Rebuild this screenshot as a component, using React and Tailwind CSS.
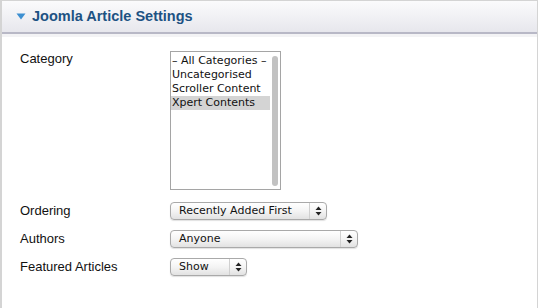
import React from "react";

function Arrows() {
  return (
    <svg width="7" height="10" viewBox="0 0 7 10" className="block">
      <path d="M3.5 0.5 L6.5 4 L0.5 4 Z" fill="#222" />
      <path d="M3.5 9.5 L6.5 6 L0.5 6 Z" fill="#222" />
    </svg>
  );
}

function Select({ label, width }) {
  return (
    <div
      className={`flex h-[18px] items-stretch rounded-[4px] border border-[#a9a9a9] bg-gradient-to-b from-[#ffffff] via-[#f4f4f4] to-[#e2e2e2] shadow-[0_1px_1px_rgba(0,0,0,0.12)] ${width}`}
    >
      <div className="flex flex-1 items-center pl-[8px] text-[11px] text-[#111] [font-family:'DejaVu_Sans',sans-serif]">
        {label}
      </div>
      <div className="flex w-[17px] items-center justify-center border-l border-[#d0d0d0]">
        <Arrows />
      </div>
    </div>
  );
}

export default function App() {
  return (
    <div className="h-[308px] w-[540px] bg-white [font-family:'Liberation_Sans',Arial,sans-serif]">
      <div className="h-[308px] w-[538px] border-l-2 border-t border-r border-[#d4d4d4]">
        <div className="flex h-[33px] items-center border-b-2 border-[#b8b8c6] bg-gradient-to-b from-[#fbfbfc] to-[#e7e7ed] pl-[14px]">
          <svg width="10" height="7" viewBox="0 0 10 7" className="mr-[6px]">
            <path d="M0.5 0.5 L9.5 0.5 L5 6.5 Z" fill="#3d8fd1" />
          </svg>
          <span className="text-[14.5px] font-bold text-[#1d5283]">Joomla Article Settings</span>
        </div>
        <div className="h-[3px] bg-[#f3f3f5]" />
        <div className="px-[18px] pt-[14px] text-[13px] leading-[18px] text-[#111]">
          <div className="flex">
            <div className="w-[150px] -mt-[1px]">Category</div>
            <div className="relative h-[139px] w-[111px] border border-[#a5a5a5] bg-white pt-[2px] [font-family:'DejaVu_Sans',sans-serif] text-[11px] leading-[14px]">
              <div className="pl-[1px]">– All Categories –</div>
              <div className="pl-[1px]">Uncategorised</div>
              <div className="pl-[1px]">Scroller Content</div>
              <div className="mr-[10px] bg-[#d4d4d4] pl-[1px]">Xpert Contents</div>
              <div className="absolute right-[2px] top-[4px] h-[130px] w-[6px] rounded-full bg-[#c2c2c2]" />
            </div>
          </div>
          <div className="mt-[12px] flex h-[18px] items-center">
            <div className="w-[150px]">Ordering</div>
            <Select label="Recently Added First" width="w-[157px]" />
          </div>
          <div className="mt-[10px] flex h-[18px] items-center">
            <div className="w-[150px]">Authors</div>
            <Select label="Anyone" width="w-[188px]" />
          </div>
          <div className="mt-[10px] flex h-[18px] items-center">
            <div className="w-[150px]">Featured Articles</div>
            <Select label="Show" width="w-[77px]" />
          </div>
        </div>
      </div>
    </div>
  );
}
